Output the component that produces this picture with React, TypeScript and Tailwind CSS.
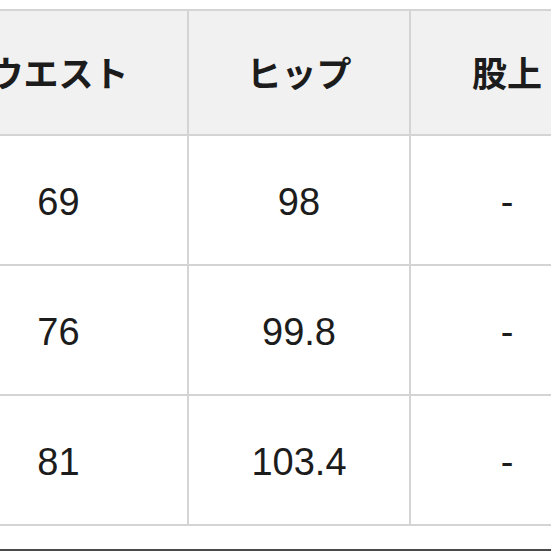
import React from "react";

const rows = [
  ["69", "98", "-"],
  ["76", "99.8", "-"],
  ["81", "103.4", "-"],
];

export default function App() {
  return (
    <div
      className="w-[551px] h-[551px] overflow-hidden bg-white flex flex-col"
      style={{ fontFamily: '"Liberation Sans", "Noto Sans CJK JP", sans-serif' }}
    >
      <div className="pt-[9px] ml-[-72px]">
        <div className="grid grid-cols-[257px_220px_192px] gap-[2px] p-[2px] bg-[#d4d4d4] w-max">
          <div className="h-[123px] bg-[#f1f1f1] flex items-center justify-center text-[35px] font-bold text-[#1c1c1c]" style={{ fontFamily: '"Noto Sans CJK JP", sans-serif' }}>
            ウエスト
          </div>
          <div className="h-[123px] bg-[#f1f1f1] flex items-center justify-center text-[35px] font-bold text-[#1c1c1c]" style={{ fontFamily: '"Noto Sans CJK JP", sans-serif' }}>
            ヒップ
          </div>
          <div className="h-[123px] bg-[#f1f1f1] flex items-center justify-center text-[35px] font-bold text-[#1c1c1c]" style={{ fontFamily: '"Noto Sans CJK JP", sans-serif' }}>
            股上
          </div>
          {rows.map((r, i) => (
            <React.Fragment key={i}>
              {r.map((c, j) => (
                <div
                  key={j}
                  className="h-[128px] bg-white flex items-center justify-center text-[38px] text-[#1c1c1c] pt-[4px]"
                >
                  {c}
                </div>
              ))}
            </React.Fragment>
          ))}
        </div>
      </div>
      <div className="mt-[23px] h-[2px] bg-[#4a4a4a] shrink-0" />
    </div>
  );
}
